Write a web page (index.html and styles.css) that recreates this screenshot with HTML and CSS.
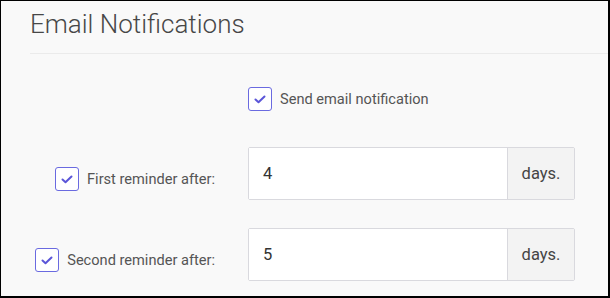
FILE: index.html
```html
<!DOCTYPE html>
<html>
<head>
<meta charset="utf-8">
<link rel="stylesheet" href="styles.css">
</head>
<body>
<div class="frame">
  <h1 class="title">Email Notifications</h1>
  <div class="form">
    <div class="label-cell first"></div>
    <label class="check-row first">
      <span class="box"><svg viewBox="0 0 24 24" width="24" height="24"><path d="M7.5 12.5 L10.5 15.2 L16.5 9.5" fill="none" stroke="#5a55d8" stroke-width="2" stroke-linecap="round" stroke-linejoin="round"/></svg></span>
      <span class="text">Send email notification</span>
    </label>

    <label class="label-cell check-row reminder">
      <span class="box"><svg viewBox="0 0 24 24" width="24" height="24"><path d="M7.5 12.5 L10.5 15.2 L16.5 9.5" fill="none" stroke="#5a55d8" stroke-width="2" stroke-linecap="round" stroke-linejoin="round"/></svg></span>
      <span class="text">First reminder after:</span>
    </label>
    <div class="group">
      <div class="input">4</div>
      <div class="addon">days.</div>
    </div>

    <label class="label-cell check-row reminder">
      <span class="box"><svg viewBox="0 0 24 24" width="24" height="24"><path d="M7.5 12.5 L10.5 15.2 L16.5 9.5" fill="none" stroke="#5a55d8" stroke-width="2" stroke-linecap="round" stroke-linejoin="round"/></svg></span>
      <span class="text">Second reminder after:</span>
    </label>
    <div class="group">
      <div class="input">5</div>
      <div class="addon">days.</div>
    </div>
  </div>
</div>
</body>
</html>
```
FILE: styles.css
```css
* { box-sizing: border-box; }
html, body { margin: 0; padding: 0; }
body { font-family: Roboto, "Liberation Sans", sans-serif; }
.frame {
  width: 610px;
  height: 298px;
  background: #f9f9f9;
  border-top: 1px solid #000;
  border-left: 1px solid #000;
  border-right: 2px solid #000;
  border-bottom: 2px solid #000;
  overflow: hidden;
}
.title {
  margin: 0 0 0 29px;
  padding: 8px 0 0 0;
  height: 53px;
  font-weight: 300;
  font-size: 26px;
  line-height: 30px;
  color: #474747;
  border-bottom: 1px solid #ebebeb;
}
.form {
  display: grid;
  grid-template-columns: 214px 327px;
  column-gap: 33px;
  row-gap: 28px;
  padding-top: 33px;
  align-items: center;
}
.first { margin-bottom: 8px; }
.label-cell { justify-self: end; }
.reminder { align-self: start; margin-top: 20px; }
.check-row {
  display: flex;
  align-items: center;
  gap: 8px;
  font-size: 14.6px;
  color: #555;
}
.box {
  width: 24px;
  height: 24px;
  border: 1.5px solid #6a6ae0;
  border-radius: 3px;
  background: #fff;
  display: flex;
  align-items: center;
  justify-content: center;
}
.box svg { display: block; flex: none; }
.group {
  display: flex;
  height: 53px;
  border: 1px solid #d9d9de;
  border-radius: 2px;
}
.input {
  flex: 1;
  background: #fff;
  display: flex;
  align-items: center;
  padding-left: 14px;
  font-size: 16.5px;
  color: #333;
}
.addon {
  width: 67px;
  background: #f3f3f3;
  border-left: 1px solid #d9d9de;
  display: flex;
  align-items: center;
  justify-content: center;
  font-size: 16.5px;
  color: #444;
}
```
